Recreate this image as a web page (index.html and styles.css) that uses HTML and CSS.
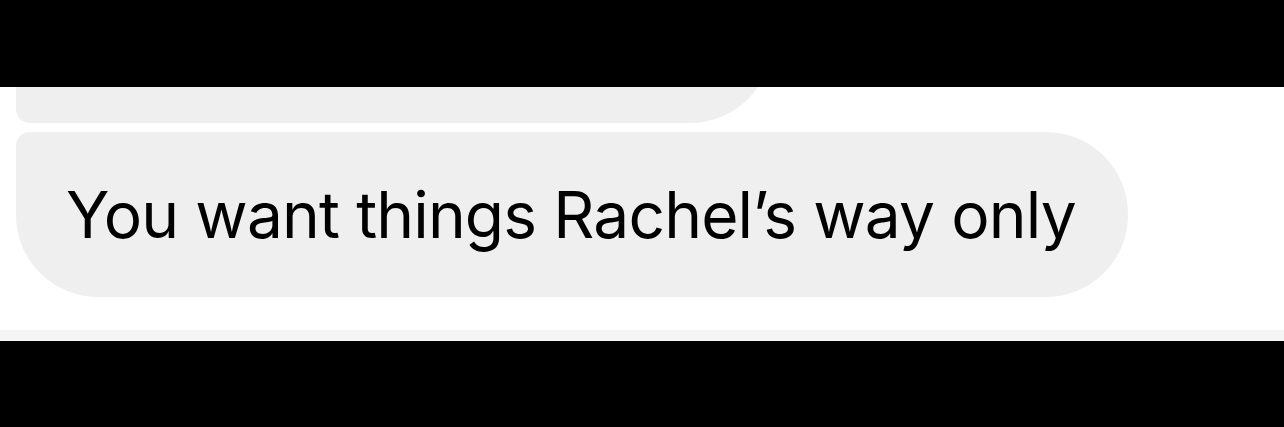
FILE: index.html
```html
<!DOCTYPE html>
<html>
<head>
    <title>Chat</title>
    <link rel="stylesheet" href="styles.css">
</head>
<body>
    <div class="bar"></div>
    <div class="thread">
        <div class="bubble first">&nbsp;</div>
        <div class="bubble last">You want things Rachel’s way only</div>
    </div>
    <div class="strip"></div>
    <div class="bar bottom"></div>
</body>
</html>
```

FILE: styles.css
```css
body {
    margin: 0;
    background: #000;
    font-family: 'Inter', 'Roboto', sans-serif;
}

.bar {
    height: 87px;
    background: #000;
}

.bar.bottom {
    height: 86px;
}

.thread {
    height: 243px;
    background: #fff;
    overflow: hidden;
    padding-left: 16px;
    display: flex;
    flex-direction: column;
    align-items: flex-start;
    gap: 9px;
}

.bubble {
    background: #efefef;
    color: #000;
    height: 165px;
    display: flex;
    align-items: center;
    box-sizing: border-box;
    padding: 0 52px 0 50px;
    font-size: 64px;
    letter-spacing: -0.85px;
    white-space: nowrap;
}

.first {
    width: 756px;
    margin-top: -129px;
    border-radius: 14px 82px 82px 14px;
}

.last {
    border-radius: 14px 82px 82px 82px;
}

.strip {
    height: 11px;
    background: #f5f5f5;
}
```
